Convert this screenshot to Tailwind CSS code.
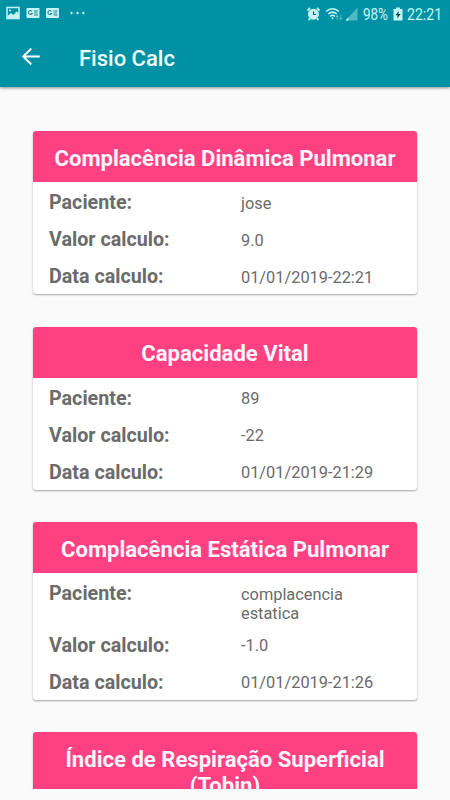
<!DOCTYPE html>
<html lang="pt-BR">
<head>
  <meta charset="UTF-8">
  <meta name="viewport" content="width=device-width, initial-scale=1.0">
  <title>Fisio Calc</title>
  <script src="https://cdn.jsdelivr.net/npm/@tailwindcss/browser@4"></script>
</head>

<body class="bg-[#fafafa] font-['Roboto',sans-serif] h-[800px] overflow-hidden flex flex-col">
  <header class="relative z-10 h-[87px] shrink-0 bg-[#0092a4] shadow-[0_1px_3px_rgba(0,0,0,0.45)]">
    <!-- Status bar -->
    <div class="h-7 flex items-center justify-between pl-1.5 pr-2 text-[#c3f5f6]">
      <div class="flex items-center gap-1.5 -mt-0.5">
        <svg class="w-3.5 h-3.5" viewBox="0 0 14 14" fill="none">
          <rect x="1" y="1.500" width="12" height="11" stroke="currentColor" stroke-width="1.500"/>
          <path d="M1.500 10l3.500-3 2.500 2 3-3.500 2.500 2V12.500h-11z" fill="currentColor"/>
          <circle cx="4" cy="4.500" r="1" fill="currentColor"/>
        </svg>
        <svg class="w-3.5 h-3.5" viewBox="0 0 14 14">
          <rect x="0.500" y="2" width="13" height="10" rx="1" fill="currentColor"/>
          <path d="M6 5.300A2 2 0 1 0 6.200 7.500H4.500M8 5h4M8 7h3.500M8 9h4" fill="none" stroke="#31848c" stroke-width="1.100"/>
        </svg>
        <svg class="w-3.5 h-3.5" viewBox="0 0 14 14">
          <rect x="0" y="2" width="13" height="10" rx="1" fill="currentColor"/>
          <path d="M5.500 5.300A2 2 0 1 0 5.700 7.500H4M7.500 5h4M7.500 7h3.500M7.500 9h4" fill="none" stroke="#31848c" stroke-width="1.100"/>
        </svg>
        <svg class="w-4 h-3.5 ml-1" viewBox="0 0 16 14" fill="currentColor">
          <circle cx="1.500" cy="7" r="1.200"/>
          <circle cx="7.500" cy="7" r="1.200"/>
          <circle cx="13.300" cy="7" r="1.200"/>
        </svg>
      </div>
      <div class="flex items-center">
        <svg class="w-3.5 h-3.5 -mt-px" viewBox="0 0 14 14">
          <circle cx="6.500" cy="7.200" r="5.500" fill="currentColor"/>
          <path d="M0.500 3.500L3 1M10 1L12.500 3.500M3 11.500L1.500 13M10 11.500L11.500 13" stroke="currentColor" stroke-width="1.800"/>
          <path d="M6.500 4.300V7.500H9" fill="none" stroke="#0d7884" stroke-width="1.200"/>
        </svg>
        <svg class="w-[18px] h-3.5 ml-1 -mt-px" viewBox="0 0 18 14" fill="none" stroke="currentColor">
          <path d="M1 4.500Q7.500-1 14 4.500M3.200 7Q7.500 3.200 11.800 7M5.200 9.500Q7.500 7.200 9.800 9.500" stroke-width="1.500"/>
          <circle cx="7.500" cy="11.200" r="1" fill="currentColor" stroke="none"/>
          <path d="M12.300 13V8.500M11 10l1.300-1.500L13.600 10M15.800 8v4.500M14.500 11l1.300 1.500L17.100 11" stroke-width="0.800" opacity="0.550"/>
        </svg>
        <svg class="w-3.5 h-3.5 ml-0.5 -mt-px" viewBox="0 0 14 14" fill="currentColor">
          <path d="M12.500 0.500V13.500H0.500z" opacity="0.400"/>
          <path d="M3.500 10.300V13.500H0.500z"/>
        </svg>
        <span class="ml-1 w-[27px] text-[17px] leading-none whitespace-nowrap"><span class="inline-block origin-left scale-x-[0.790]">98%</span></span>
        <svg class="w-2.5 h-3.5 ml-[3px] -mt-px" viewBox="0 0 10 14">
          <path d="M3 0.500h4v1.500h2.500v11.500h-9V2H3z" fill="currentColor"/>
          <path d="M6 4L2.500 8.200H4.700L4 11.500L7.700 7H5.400z" fill="#053e45"/>
        </svg>
        <span class="ml-1 w-[35px] text-[17px] leading-none whitespace-nowrap"><span class="inline-block origin-left scale-x-[0.830]">22:21</span></span>
      </div>
    </div>

    <!-- Toolbar -->
    <div class="h-[59px] flex items-center pl-[21px]">
      <svg class="w-5 h-5 -mt-1" viewBox="0 0 20 20" fill="none" stroke="white" stroke-width="1.900">
        <path d="M18.700 10.500H2.500M10.300 2.500L2.200 10.500L10.300 18.500"/>
      </svg>
      <h1 class="ml-[38px] pt-0.5 text-[22px] leading-[26px] font-medium text-[#f4ffff]">Fisio Calc</h1>
    </div>
  </header>

  <!-- Results list -->
  <main class="h-[702px] shrink-0 overflow-hidden px-[33px] pt-[44px] flex flex-col gap-[32.500px] text-[#6b6b6b]">
    <section class="shrink-0 rounded-[3px] bg-white shadow-[0_1px_2px_rgba(0,0,0,0.35)]">
      <h2 class="rounded-t-[3px] bg-[#ff4081] h-[51px] pt-[14.500px] text-center text-[22.080px] leading-[26px] font-bold text-[#fff5fa]">Complacência Dinâmica Pulmonar</h2>
      <dl class="grid grid-cols-[192px_1fr] px-4 pt-[8px] pb-1.5 gap-y-[13px]">
        <dt class="pt-0.5 text-[19.700px] leading-[22px] font-bold">Paciente:</dt>
        <dd class="pt-[3.500px] text-[16.350px] leading-[20px]">jose</dd>
        <dt class="pt-0.5 text-[19.700px] leading-[22px] font-bold">Valor calculo:</dt>
        <dd class="pt-[3.500px] text-[16.350px] leading-[20px]">9.0</dd>
        <dt class="pt-0.5 text-[19.700px] leading-[22px] font-bold">Data calculo:</dt>
        <dd class="pt-[3.500px] text-[16.350px] leading-[20px]">01/01/2019-22:21</dd>
      </dl>
    </section>

    <section class="shrink-0 rounded-[3px] bg-white shadow-[0_1px_2px_rgba(0,0,0,0.35)]">
      <h2 class="rounded-t-[3px] bg-[#ff4081] h-[51px] pt-3.5 text-center text-[22.080px] leading-[26px] font-bold text-[#fff5fa]">Capacidade Vital</h2>
      <dl class="grid grid-cols-[192px_1fr] px-4 pt-[8px] pb-1.5 gap-y-[13px]">
        <dt class="pt-0.5 text-[19.700px] leading-[22px] font-bold">Paciente:</dt>
        <dd class="pt-[3.500px] text-[16.350px] leading-[20px]">89</dd>
        <dt class="pt-0.5 text-[19.700px] leading-[22px] font-bold">Valor calculo:</dt>
        <dd class="pt-[3.500px] text-[16.350px] leading-[20px]">-22</dd>
        <dt class="pt-0.5 text-[19.700px] leading-[22px] font-bold">Data calculo:</dt>
        <dd class="pt-[3.500px] text-[16.350px] leading-[20px]">01/01/2019-21:29</dd>
      </dl>
    </section>

    <section class="shrink-0 rounded-[3px] bg-white shadow-[0_1px_2px_rgba(0,0,0,0.35)]">
      <h2 class="rounded-t-[3px] bg-[#ff4081] h-[51px] pt-[14.500px] text-center text-[22.080px] leading-[26px] font-bold text-[#fff5fa]">Complacência Estática Pulmonar</h2>
      <dl class="grid grid-cols-[192px_1fr] px-4 pt-[8px] pb-1.5 gap-y-[13px]">
        <dt class="pt-0.5 text-[19.700px] leading-[22px] font-bold">Paciente:</dt>
        <dd class="pt-[3.500px] -mb-1 text-[16.350px] leading-[19.500px]">complacencia<br>estatica</dd>
        <dt class="pt-0.5 text-[19.700px] leading-[22px] font-bold">Valor calculo:</dt>
        <dd class="pt-[3.500px] text-[16.350px] leading-[20px]">-1.0</dd>
        <dt class="pt-0.5 text-[19.700px] leading-[22px] font-bold">Data calculo:</dt>
        <dd class="pt-[3.500px] text-[16.350px] leading-[20px]">01/01/2019-21:26</dd>
      </dl>
    </section>

    <section class="shrink-0 rounded-[3px] bg-white shadow-[0_1px_2px_rgba(0,0,0,0.35)]">
      <h2 class="rounded-t-[3px] bg-[#ff4081] px-4 pt-[14.600px] pb-3 text-center text-[22.080px] leading-[26px] font-bold text-[#fff5fa]">Índice de Respiração Superficial<br>(Tobin)</h2>
    </section>
  </main>
</body>
</html>
